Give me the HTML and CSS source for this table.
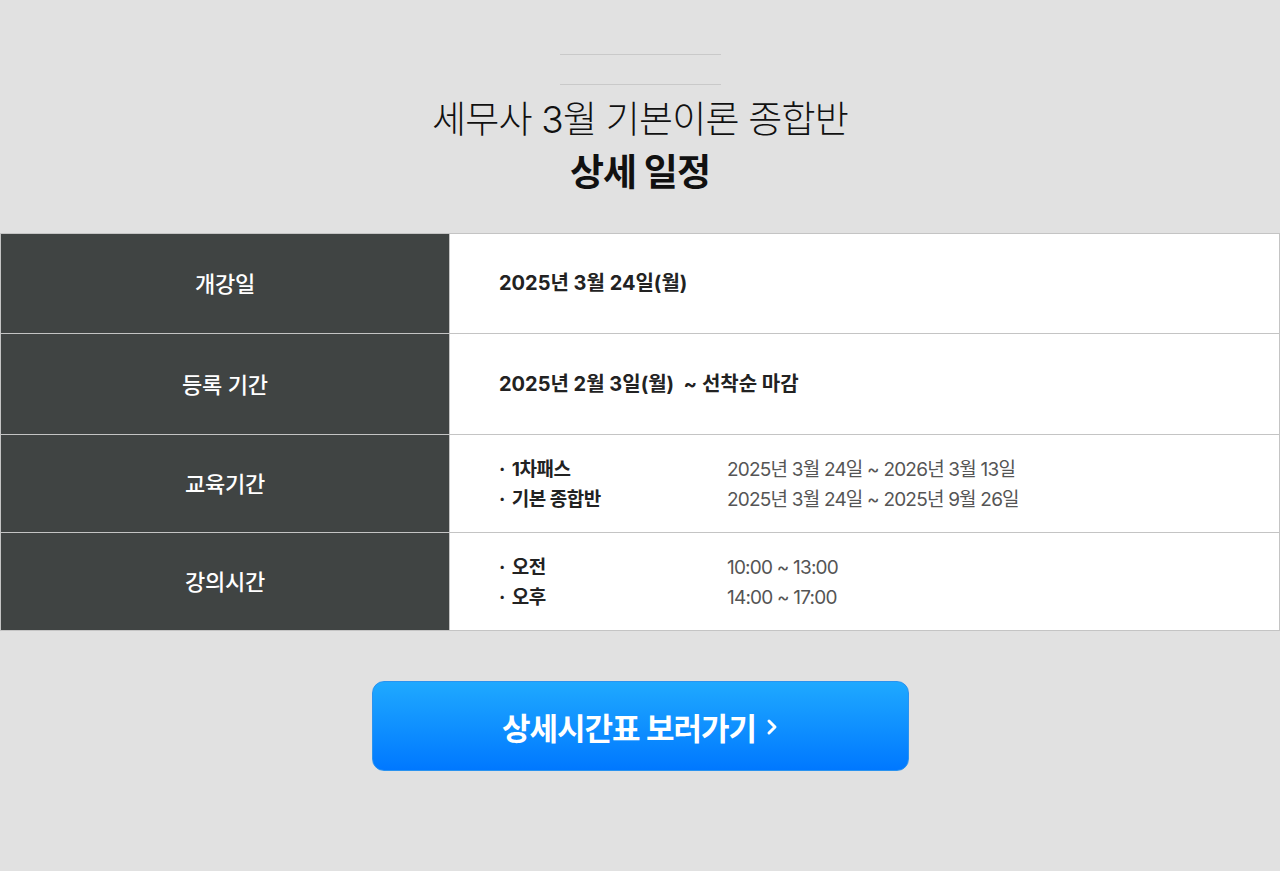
FILE: index.html
```html
<!DOCTYPE html>
<html lang="ko">
<head>
    <meta charset="UTF-8">
    <meta name="viewport" content="width=device-width, initial-scale=1.0">
    <title>세무사 3월 기본이론 종합반 상세 일정</title>
    <link rel="stylesheet" href="styles.css">
</head>
<body>
    <header class="title-block">
        <div class="rule"></div>
        <div class="rule"></div>
        <h1>
            <span class="title-light">세무사 3월 기본이론 종합반</span>
            <strong class="title-bold">상세 일정</strong>
        </h1>
    </header>

    <table class="schedule">
        <tr class="row-tall">
            <th>개강일</th>
            <td class="strong">2025년 3월 24일(월)</td>
        </tr>
        <tr class="row-tall2">
            <th>등록 기간</th>
            <td class="strong">2025년 2월 3일(월) &nbsp;~ 선착순 마감</td>
        </tr>
        <tr>
            <th>교육기간</th>
            <td>
                <ul class="list">
                    <li><span class="label"><span class="dot">·</span>1차패스</span><span class="value">2025년 3월 24일 ~ 2026년 3월 13일</span></li>
                    <li><span class="label"><span class="dot">·</span>기본 종합반</span><span class="value">2025년 3월 24일 ~ 2025년 9월 26일</span></li>
                </ul>
            </td>
        </tr>
        <tr>
            <th>강의시간</th>
            <td>
                <ul class="list">
                    <li><span class="label"><span class="dot">·</span>오전</span><span class="value">10:00 ~ 13:00</span></li>
                    <li><span class="label"><span class="dot">·</span>오후</span><span class="value">14:00 ~ 17:00</span></li>
                </ul>
            </td>
        </tr>
    </table>

    <div class="cta">
        <a class="cta-btn" href="#">상세시간표 보러가기
            <svg class="arrow" width="12" height="18" viewBox="0 0 12 18" aria-hidden="true">
                <path d="M3 3 L9 9 L3 15" fill="none" stroke="#fff" stroke-width="3" stroke-linecap="round" stroke-linejoin="round"/>
            </svg>
        </a>
    </div>
</body>
</html>
```

FILE: styles.css
```css
body {
    font-family: Inter, "Noto Sans CJK KR", sans-serif;
    background-color: #e1e1e1;
    color: #222;
    margin: 0;
    padding: 0;
}

.title-block {
    display: flex;
    flex-direction: column;
    align-items: center;
    padding-top: 54px;
}

.rule {
    width: 161px;
    height: 1px;
    background-color: #c9c9c9;
    margin-bottom: 29px;
}

.rule + .rule {
    margin-bottom: 0;
}

.title-block h1 {
    margin: 0;
    display: flex;
    flex-direction: column;
    align-items: center;
    color: #111;
}

.title-light {
    font-size: 37px;
    font-weight: 300;
    line-height: 48px;
    margin-top: 11px;
    letter-spacing: -0.8px;
}

.title-bold {
    font-size: 37px;
    font-weight: 700;
    line-height: 48px;
    margin-top: 5px;
    letter-spacing: -1px;
}

.schedule {
    width: 100%;
    border-collapse: collapse;
    margin-top: 36px;
}

.schedule th,
.schedule td {
    border: 1px solid #c4c4c4;
    padding: 0;
}

/* padding + height keep rows at 99 / 100 / 97 / 97 */
.schedule th {
    width: 448px;
    height: 94px;
    padding-bottom: 3px;
    background-color: #404443;
    color: #fff;
    font-size: 22px;
    font-weight: 500;
    letter-spacing: -0.2px;
}

.schedule td {
    height: 97px;
    background-color: #fff;
    padding-left: 49px;
    font-size: 19px;
}

.schedule .row-tall th {
    height: 96px;
}

.schedule .row-tall2 th {
    height: 97px;
}

.schedule td.strong {
    height: 95px;
    padding-bottom: 4px;
    font-size: 20px;
    font-weight: 700;
    color: #222;
    letter-spacing: 0;
}

.schedule .row-tall2 td.strong {
    height: 96px;
}

.list {
    list-style: none;
    margin: 0;
    padding: 2px 0 0;
}

.list li {
    display: flex;
    line-height: 30px;
}

.label {
    width: 228px;
    font-weight: 700;
    color: #222;
    letter-spacing: -0.5px;
}

.dot {
    margin-right: 7px;
}

.value {
    color: #555;
    letter-spacing: -0.8px;
}

.cta {
    display: flex;
    justify-content: center;
    padding-top: 50px;
}

.cta-btn {
    box-sizing: border-box;
    width: 537px;
    height: 90px;
    border: 1px solid #2a93f0;
    border-radius: 12px;
    background: linear-gradient(to bottom, #1fa9ff, #0078ff);
    color: #fff;
    font-size: 31px;
    font-weight: 700;
    letter-spacing: -1px;
    text-decoration: none;
    display: flex;
    align-items: center;
    justify-content: center;
}

.arrow {
    margin-left: 10px;
    margin-top: 2px;
}
```
